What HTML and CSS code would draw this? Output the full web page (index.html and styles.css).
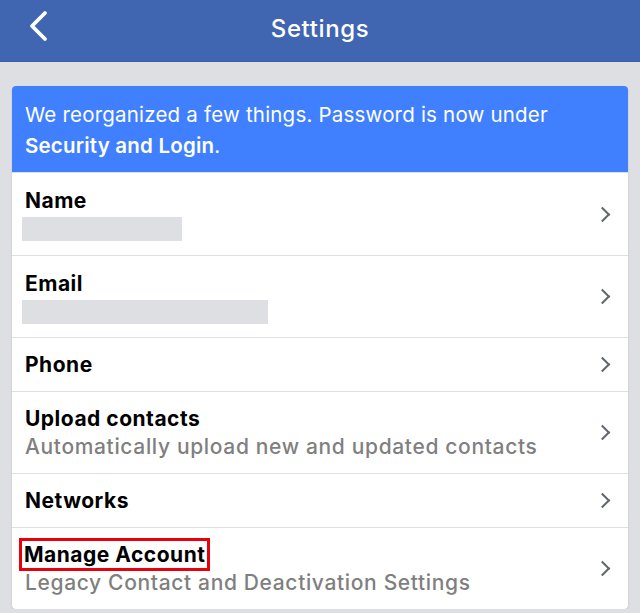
FILE: index.html
```html
<!DOCTYPE html>
<html lang="en">
<head>
    <meta charset="UTF-8">
    <meta name="viewport" content="width=device-width, initial-scale=1.0">
    <title>Settings</title>
    <link rel="stylesheet" href="styles.css">
</head>
<body>
    <div class="header">
        <a href="#" class="back">
            <svg width="22" height="32" viewBox="0 0 22 32"><path d="M18 3 L5 16 L18 29" fill="none" stroke="#fff" stroke-width="3.8" stroke-linecap="round" stroke-linejoin="round"/></svg>
        </a>
        <h1>Settings</h1>
    </div>

    <div class="card">
        <div class="notice">
            We reorganized a few things. Password is now under <b>Security and Login</b>.
        </div>

        <div class="row first">
            <div class="info">
                <div class="title">Name</div>
                <div class="blank" style="width: 160px"></div>
            </div>
            <span class="chev"></span>
        </div>
        <div class="row">
            <div class="info">
                <div class="title">Email</div>
                <div class="blank" style="width: 246px"></div>
            </div>
            <span class="chev"></span>
        </div>
        <div class="row short">
            <div class="info">
                <div class="title">Phone</div>
            </div>
            <span class="chev"></span>
        </div>
        <div class="row">
            <div class="info">
                <div class="title">Upload contacts</div>
                <div class="sub">Automatically upload new and updated contacts</div>
            </div>
            <span class="chev"></span>
        </div>
        <div class="row short">
            <div class="info">
                <div class="title">Networks</div>
            </div>
            <span class="chev"></span>
        </div>
        <div class="row">
            <div class="info">
                <div class="title"><span class="marked">Manage Account</span></div>
                <div class="sub">Legacy Contact and Deactivation Settings</div>
            </div>
            <span class="chev"></span>
        </div>
    </div>
</body>
</html>
```

FILE: styles.css
```css
body {
    font-family: Inter, "Noto Sans", sans-serif;
    margin: 0;
    padding: 0;
    background-color: #dddfe2;
    overflow: hidden;
}
.header {
    height: 61px;
    background-color: #4066b1;
    border-bottom: 1px solid #3a5ea8;
    display: flex;
    align-items: center;
    justify-content: center;
    position: relative;
}
.header h1 {
    margin: 0 0 4px 0;
    color: #fff;
    font-size: 24px;
    font-weight: 500;
    letter-spacing: 0.6px;
}
.back {
    position: absolute;
    left: 27px;
    top: 10px;
}
.card {
    margin: 24px 12px 0 12px;
    background-color: #fff;
    border-radius: 4px;
    overflow: hidden;
    box-shadow: 0 1px 2px rgba(0, 0, 0, 0.15);
}
.notice {
    background-color: #4080ff;
    color: #fff;
    font-size: 20.5px;
    line-height: 31px;
    padding: 13px 10px 11px 13px;
    letter-spacing: 0.2px;
}
.notice b {
    font-weight: 600;
}
.row {
    box-sizing: border-box;
    display: flex;
    align-items: center;
    height: 82px;
    border-top: 1px solid #dddfe2;
    padding: 0 14px 0 13px;
}
.row.first {
    height: 83px;
}
.row.short {
    height: 54px;
}
.info {
    flex: 1;
}
.title {
    font-size: 21px;
    font-weight: 650;
    color: #000;
    line-height: 28px;
    letter-spacing: 0.5px;
}
.sub {
    font-size: 21px;
    font-weight: 500;
    color: #7f7f7f;
    line-height: 28px;
    letter-spacing: 0.65px;
}
.blank {
    height: 24px;
    background-color: #dddfe2;
    margin: 2px 0 0 -3px;
}
.marked {
    outline: 3.5px solid #e8000b;
    outline-offset: 1px;
    padding: 0 1px;
    margin-left: -2px;
}
.chev {
    width: 9px;
    height: 9px;
    border-right: 2.5px solid #606770;
    border-bottom: 2.5px solid #606770;
    transform: rotate(-45deg);
    margin-right: 6px;
}
```
